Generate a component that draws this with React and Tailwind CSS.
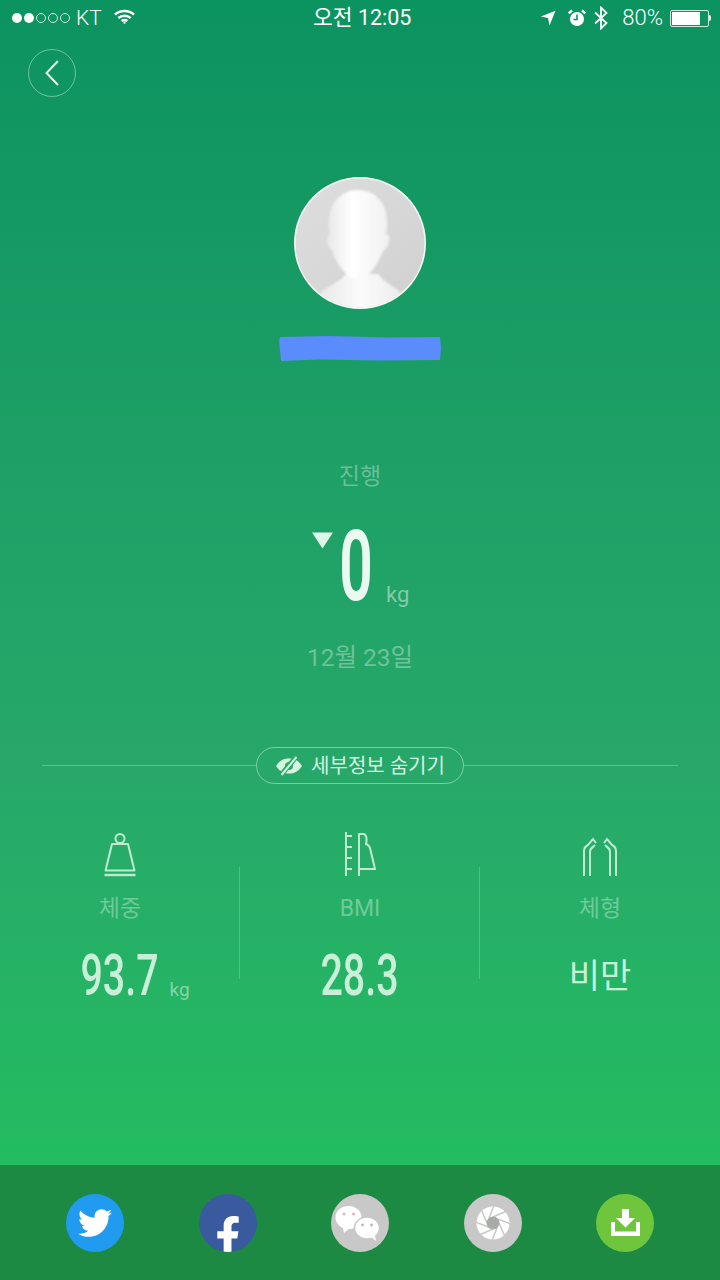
import { FaTwitter, FaFacebookF } from 'react-icons/fa';

const font = { fontFamily: '"Roboto", "Noto Sans CJK KR", sans-serif' };

function StatusBar() {
    return (
        <div className="relative flex h-[36px] items-center justify-between pl-[12px] pr-[9px] text-white">
            <div className="flex items-center">
                <div className="flex items-center gap-[2px]">
                    <span className="h-[10px] w-[10px] rounded-full bg-white"></span>
                    <span className="h-[10px] w-[10px] rounded-full bg-white"></span>
                    <span className="h-[10px] w-[10px] rounded-full border border-white/80"></span>
                    <span className="h-[10px] w-[10px] rounded-full border border-white/80"></span>
                    <span className="h-[10px] w-[10px] rounded-full border border-white/80"></span>
                </div>
                <span className="ml-[6px] text-[21px] font-light leading-none">KT</span>
                <svg className="ml-[12px] -translate-y-[1px]" width="21" height="16" viewBox="0 0 22 16" fill="none" stroke="white" strokeWidth="2.6">
                    <path d="M1 5.500C6.500 .6 15.500 .6 21 5.500" />
                    <path d="M4.500 9C8.300 5.800 13.700 5.800 17.500 9" />
                    <path d="M8 12.200C9.800 10.900 12.200 10.900 14 12.200" />
                    <circle cx="11" cy="14" r="1.200" fill="white" stroke="none" />
                </svg>
            </div>
            <span className="absolute left-[313px] top-[6px] text-[21.5px] leading-[24px]">오전 12:05</span>
            <div className="flex items-center">
                <svg width="16" height="16" viewBox="0 0 16 16" fill="white"><path d="M15.500 .8 9.500 15.500 8 8 .8 6.600z" /></svg>
                <svg className="ml-[12px]" width="18" height="18" viewBox="0 0 18 18">
                    <circle cx="9" cy="10" r="7" fill="white" />
                    <path d="M9 5.500V10.500H5.500" fill="none" stroke="#0b9360" strokeWidth="1.600" />
                    <path d="M.8 4.500 4 1.300M17.200 4.500 14 1.300" stroke="white" strokeWidth="2.400" />
                </svg>
                <svg className="ml-[8px]" width="14" height="24" viewBox="0 0 14 24" fill="none" stroke="white" strokeWidth="1.800">
                    <path d="M1 6.500 12.500 17 7 22.500V1.500L12.500 7 1 17.500" />
                </svg>
                <span className="ml-[14px] text-[22px] font-light leading-none">80%</span>
                <div className="ml-[7px] flex items-center">
                    <div className="h-[17px] w-[39px] rounded-[2px] border border-white/80 p-[1px]">
                        <div className="h-full w-[80%] bg-white"></div>
                    </div>
                    <div className="h-[6px] w-[2px] rounded-r-full bg-white/90"></div>
                </div>
            </div>
        </div>
    );
}

function Avatar() {
    return (
        <svg width="132" height="132" viewBox="0 0 132 132">
            <defs>
                <linearGradient id="face" x1="0" y1="0" x2="1" y2="0">
                    <stop offset="0" stopColor="#e8e8e8" />
                    <stop offset="0.4" stopColor="#ffffff" />
                    <stop offset="1" stopColor="#f0f0f0" />
                </linearGradient>
                <linearGradient id="chest" x1="0" y1="0" x2="1" y2="0">
                    <stop offset="0" stopColor="#e2e2e2" />
                    <stop offset="0.5" stopColor="#fbfbfb" />
                    <stop offset="1" stopColor="#e6e6e6" />
                </linearGradient>
                <linearGradient id="bg" x1="0" y1="0" x2="1" y2="1">
                    <stop offset="0" stopColor="#dedede" />
                    <stop offset="0.6" stopColor="#d6d6d6" />
                    <stop offset="1" stopColor="#d0d0d0" />
                </linearGradient>
                <filter id="soft" x="-10%" y="-10%" width="120%" height="120%">
                    <feGaussianBlur stdDeviation="1.300" />
                </filter>
                <clipPath id="clip"><circle cx="66" cy="66" r="64.500" /></clipPath>
            </defs>
            <circle cx="66" cy="66" r="66" fill="#f4fbf7" />
            <g clipPath="url(#clip)">
                <circle cx="66" cy="66" r="65" fill="url(#bg)" />
                <g filter="url(#soft)">
                    <path d="M10 140 29 113C38 108 46 104 52 97L84 97C90 104 96 108 104 113L124 140Z" fill="url(#chest)" />
                    <path d="M64 13C82 13 93 27 93 44C93 50 93 54 92 58C95 57 96 60 95 65C94 69 91 73 89 74C85 85 78 96 70 101C66 103 60 103 56 100C48 94 41 84 38 73C35 71 33 68 33 64C33 60 35 57 36 58C35 52 34 48 35 42C36 26 47 13 64 13Z" fill="url(#face)" />
                </g>
            </g>
        </svg>
    );
}

function WeightIcon() {
    return (
        <svg width="36" height="44" viewBox="0 0 36 44" fill="none" stroke="#bfeacf" strokeWidth="2">
            <circle cx="18" cy="5.500" r="4.500" />
            <path d="M10 11H26L32.500 37.500H3.500Z" strokeLinejoin="round" />
            <path d="M2.500 42H33.500" strokeWidth="2.400" />
        </svg>
    );
}

function BmiIcon() {
    return (
        <svg width="32" height="46" viewBox="0 0 32 46" fill="none" stroke="#bfeacf" strokeWidth="2">
            <path d="M2 1V45" />
            <path d="M2 5H8M2 16H8M2 27H8M2 38H8" />
            <path d="M15 2V45" />
            <path d="M15 3H19C23 3 23 9 22 13C25 14 26 16 26.500 19L31 38H15" />
        </svg>
    );
}

function BodyIcon() {
    return (
        <svg width="36" height="40" viewBox="0 0 36 40" fill="none" stroke="#bfeacf" strokeWidth="2">
            <path d="M2 39V14C2 10 4 9 6 8L11 2L14 6" />
            <path d="M34 39V14C34 10 32 9 30 8L25 2L22 6" />
            <path d="M8 39V15C8 12 9 11 11 10L13 8" />
            <path d="M28 39V15C28 12 27 11 25 10L23 8" />
        </svg>
    );
}

function EyeOff() {
    return (
        <svg width="28" height="20" viewBox="0 0 28 20">
            <path d="M1 10C5 4 9 2.500 14 2.500S23 4 27 10C23 16 19 17.500 14 17.500S5 16 1 10Z" fill="#d6f3e1" />
            <circle cx="14" cy="10" r="4" fill="#2aa967" />
            <path d="M6 19 21 1" stroke="#2aa967" strokeWidth="5" />
            <path d="M6.500 19 21.500 1" stroke="#d6f3e1" strokeWidth="2" />
        </svg>
    );
}

function Stat({ icon, label, children, divider }) {
    return (
        <div className="relative flex flex-1 flex-col items-center">
            {divider && <div className="absolute right-0 top-[38px] h-[112px] w-px bg-white/20"></div>}
            <div className="flex h-[48px] items-end">{icon}</div>
            <div className="mt-[17px] text-[23px] leading-[30px] text-white/35">{label}</div>
            <div className="mt-[22px] flex h-[60px] items-center">{children}</div>
        </div>
    );
}

// narrow numerals: no condensed family is installed, so squeeze the text
function Narrow({ children }) {
    return (
        <span className="inline-block origin-center scale-x-[0.69] text-[57px] font-medium leading-[60px] text-[#c9efd8]">{children}</span>
    );
}

function ShareCircle({ className, children }) {
    return (
        <div className={`flex h-[58px] w-[58px] items-center justify-center overflow-hidden rounded-full ${className}`}>
            {children}
        </div>
    );
}

function WeChat() {
    return (
        <svg width="58" height="58" viewBox="0 0 58 58">
            <ellipse cx="17.500" cy="23.500" rx="13" ry="11.500" fill="white" />
            <path d="M11 31 13 39 20 33Z" fill="white" />
            <circle cx="13" cy="20" r="1.500" fill="#d8b8b8" />
            <circle cx="22.500" cy="20" r="1.500" fill="#d8b8b8" />
            <ellipse cx="36" cy="34" rx="12.500" ry="11" fill="white" stroke="#c8c8c8" strokeWidth="1.500" />
            <path d="M40 43 45 47 43.500 40Z" fill="white" />
            <circle cx="31.500" cy="31" r="1.400" fill="#b8b8b8" />
            <circle cx="40.500" cy="31" r="1.400" fill="#b8b8b8" />
        </svg>
    );
}

function Aperture() {
    const blades = [0, 45, 90, 135, 180, 225, 270, 315];
    return (
        <svg width="34" height="34" viewBox="0 0 34 34">
            <circle cx="17" cy="17" r="16.500" fill="white" />
            {blades.map(a => (
                <path key={a} d="M23 17 L 30 33" stroke="#c8c8c8" strokeWidth="1.500" transform={`rotate(${a} 17 17)`} />
            ))}
            <circle cx="17" cy="17" r="6.500" fill="#a8aca8" />
        </svg>
    );
}

export default function App() {
    return (
        <div className="flex h-[1280px] w-[720px] flex-col overflow-hidden bg-gradient-to-b from-[#0b9360] via-[#27a86a] via-60% to-[#22c25c]" style={font}>
            <StatusBar />

            <main className="flex-1">
                <div className="ml-[28px] mt-[13px] flex h-[48px] w-[48px] items-center justify-center rounded-full border border-white/40">
                    <svg width="14" height="26" viewBox="0 0 14 26" fill="none" stroke="#e6f7ee" strokeWidth="2">
                        <path d="M13 1 1.500 13 13 25" />
                    </svg>
                </div>

                <div className="mt-[80px] flex flex-col items-center">
                    <Avatar />
                    <svg className="mt-[27px]" width="162" height="25" viewBox="0 0 162 25">
                        <path d="M1 1 50 0 110 1.500 161 1 162 12 161 24 100 24.500 40 23.500 2 25 1 14 0 6Z" fill="#5b8cfd" />
                    </svg>
                </div>

                <div className="mt-[100px] text-center text-[23px] leading-[32px] text-white/35">진행</div>

                <div className="relative mt-[24px] flex h-[100px] justify-center">
                    <div className="relative mr-[8px]">
                        <span className="inline-block origin-center scale-x-[0.6] text-[98px] font-semibold leading-[100px] text-[#eafaf1]">0</span>
                        <svg className="absolute left-[-16px] top-[15px]" width="21" height="17" viewBox="0 0 22 17"><path d="M0 0H22L11 17Z" fill="#e0f6ea" /></svg>
                        <span className="absolute left-[58px] top-[63px] text-[22px] leading-[30px] text-white/45">kg</span>
                    </div>
                </div>

                <div className="mt-[25px] text-center text-[24.5px] leading-[32px] text-white/35">12월 23일</div>

                <div className="mt-[73px] flex items-center px-[42px]">
                    <div className="h-px flex-1 bg-white/25"></div>
                    <div className="flex h-[37px] w-[208px] items-center justify-center gap-[8px] rounded-full border border-white/40 text-[20px] text-[#d6f3e1]">
                        <EyeOff />
                        <span>세부정보 숨기기</span>
                    </div>
                    <div className="h-px flex-1 bg-white/25"></div>
                </div>

                <div className="mt-[45px] flex">
                    <Stat icon={<WeightIcon />} label="체중" divider>
                        <div className="relative">
                            <Narrow>93.7</Narrow>
                            <span className="absolute left-[106px] top-[31px] text-[19px] leading-[26px] text-white/45">kg</span>
                        </div>
                    </Stat>
                    <Stat icon={<BmiIcon />} label="BMI" divider>
                        <Narrow>28.3</Narrow>
                    </Stat>
                    <Stat icon={<BodyIcon />} label="체형">
                        <span className="text-[34px] text-[#c9efd8]">비만</span>
                    </Stat>
                </div>
            </main>

            <footer className="flex h-[115px] items-center justify-between bg-[#1c8a43] px-[66px]">
                <ShareCircle className="bg-[#209bef]"><FaTwitter size={34} color="white" /></ShareCircle>
                <ShareCircle className="bg-[#3a5a9f] items-end">
                    <FaFacebookF size={40} color="white" className="translate-y-[4px]" />
                </ShareCircle>
                <ShareCircle className="bg-[#c8c8c8]"><WeChat /></ShareCircle>
                <ShareCircle className="bg-[#c8c8c8]"><Aperture /></ShareCircle>
                <ShareCircle className="bg-[#6fc63c]">
                    <svg width="29" height="27" viewBox="0 0 29 27" fill="white">
                        <path d="M11 0H18V9H24L14.500 18.500 5 9H11Z" />
                        <path d="M0 13H4V22.500H25V13H29V27H0Z" />
                    </svg>
                </ShareCircle>
            </footer>
        </div>
    );
}
